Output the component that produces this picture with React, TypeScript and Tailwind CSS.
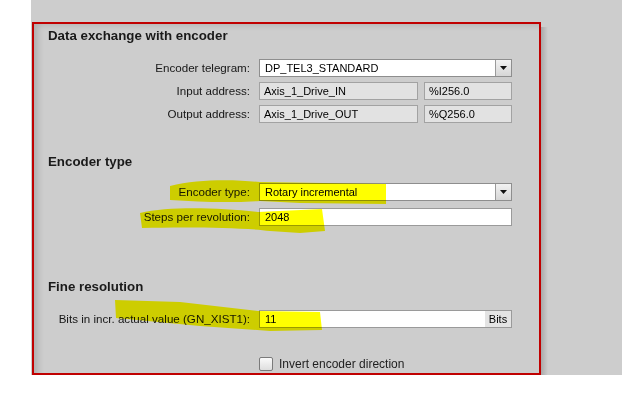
import React from 'react';

const font = { fontFamily: '"Liberation Sans", Arial, sans-serif' };

function Label({ children }: { children: React.ReactNode }) {
  return <div className="w-[216px] shrink-0 text-right text-[11.6px] text-[#161616]">{children}</div>;
}

function ArrowButton() {
  return (
    <div className="w-[16px] h-full border-l border-[#9a9a9a] bg-gradient-to-b from-[#f2f2f2] to-[#d6d6d6] flex items-center justify-center">
      <svg width="7" height="4" viewBox="0 0 7 4">
        <path d="M0 0 H7 L3.5 4 Z" fill="#111" />
      </svg>
    </div>
  );
}

function Dropdown({ value }: { value: string }) {
  return (
    <div className="ml-[9px] w-[253px] h-[18px] border border-[#8e8e8e] bg-white flex items-stretch">
      <div className="flex-1 pl-[5px] text-[11px] leading-[16px] text-black">{value}</div>
      <ArrowButton />
    </div>
  );
}

function ReadOnly({ value, className }: { value: string; className?: string }) {
  return (
    <div className={"h-[18px] border border-[#a2a2a2] bg-[#e2e2e2] pl-[4px] text-[11px] leading-[16px] text-black " + (className ?? '')}>
      {value}
    </div>
  );
}

function TextInput({ value, unit }: { value: string; unit?: string }) {
  return (
    <div className="ml-[9px] w-[253px] h-[18px] border border-[#9a9a9a] bg-white flex items-stretch">
      <div className="flex-1 pl-[5px] text-[11px] leading-[16px] text-black">{value}</div>
      {unit && <div className="w-[26px] bg-[#e4e4e4] text-[11px] leading-[16px] text-center text-black">{unit}</div>}
    </div>
  );
}

function Heading({ children, className }: { children: React.ReactNode; className?: string }) {
  return <div className={"pl-[14px] text-[13.3px] leading-[16px] font-bold text-[#1a1a1a] " + (className ?? '')}>{children}</div>;
}

export default function App() {
  return (
    <div className="relative w-[622px] h-[398px] bg-white overflow-hidden" style={font}>
      <div className="ml-[31px] h-[375px] bg-[#cdcdcd] flex">
        <div className="ml-[1px] mt-[22px] w-[509px] h-[353px] border-2 border-b-0 border-[#c00000] shadow-[inset_8px_5px_6px_-4px_rgba(0,0,0,0.15)] flex flex-col">
          <Heading className="mt-[4px]">Data exchange with encoder</Heading>

          <div className="mt-[15px] flex items-center">
            <Label>Encoder telegram:</Label>
            <Dropdown value="DP_TEL3_STANDARD" />
          </div>
          <div className="mt-[5px] flex items-center">
            <Label>Input address:</Label>
            <ReadOnly value="Axis_1_Drive_IN" className="ml-[9px] w-[159px]" />
            <ReadOnly value="%I256.0" className="ml-[6px] w-[88px]" />
          </div>
          <div className="mt-[5px] flex items-center">
            <Label>Output address:</Label>
            <ReadOnly value="Axis_1_Drive_OUT" className="ml-[9px] w-[159px]" />
            <ReadOnly value="%Q256.0" className="ml-[6px] w-[88px]" />
          </div>

          <Heading className="mt-[31px]">Encoder type</Heading>
          <div className="mt-[13px] flex items-center">
            <Label>Encoder type:</Label>
            <Dropdown value="Rotary incremental" />
          </div>
          <div className="mt-[7px] flex items-center">
            <Label>Steps per revolution:</Label>
            <TextInput value="2048" />
          </div>

          <Heading className="mt-[53px]">Fine resolution</Heading>
          <div className="mt-[15px] flex items-center">
            <Label>Bits in incr. actual value (GN_XIST1):</Label>
            <TextInput value="11" unit="Bits" />
          </div>

          <div className="mt-[29px] ml-[225px] flex items-center">
            <div className="w-[14px] h-[14px] rounded-[2px] border border-[#7a7a7a] bg-gradient-to-b from-[#fafafa] to-[#dedede]" />
            <span className="ml-[6px] text-[12px] leading-[14px] text-[#1e1e1e]">Invert encoder direction</span>
          </div>
        </div>
        <div className="mt-[27px] w-[7px] bg-gradient-to-r from-[#a9a9a9] to-[#cdcdcd]" />
      </div>
      <div className="absolute left-[32px] top-[373px] w-[509px] h-[2px] bg-[#c00000]" />

      <svg className="absolute left-0 top-0 pointer-events-none mix-blend-multiply" width="622" height="398">
        <path d="M170,186 C200,178 240,180 260,182 L386,184 L386,204 L300,203 L260,201 C230,203 200,202 170,200 Z" fill="#ffff00" />
        <path d="M140,213 C170,206 220,208 258,212 L322,209 L325,231 L300,233 L270,231 C240,227 180,227 142,228 Z" fill="#ffff00" />
        <path d="M115,300 L180,302 L258,311 L320,312 L322,330 L270,331 L200,326 L116,318 Z" fill="#ffff00" />
      </svg>
    </div>
  );
}
